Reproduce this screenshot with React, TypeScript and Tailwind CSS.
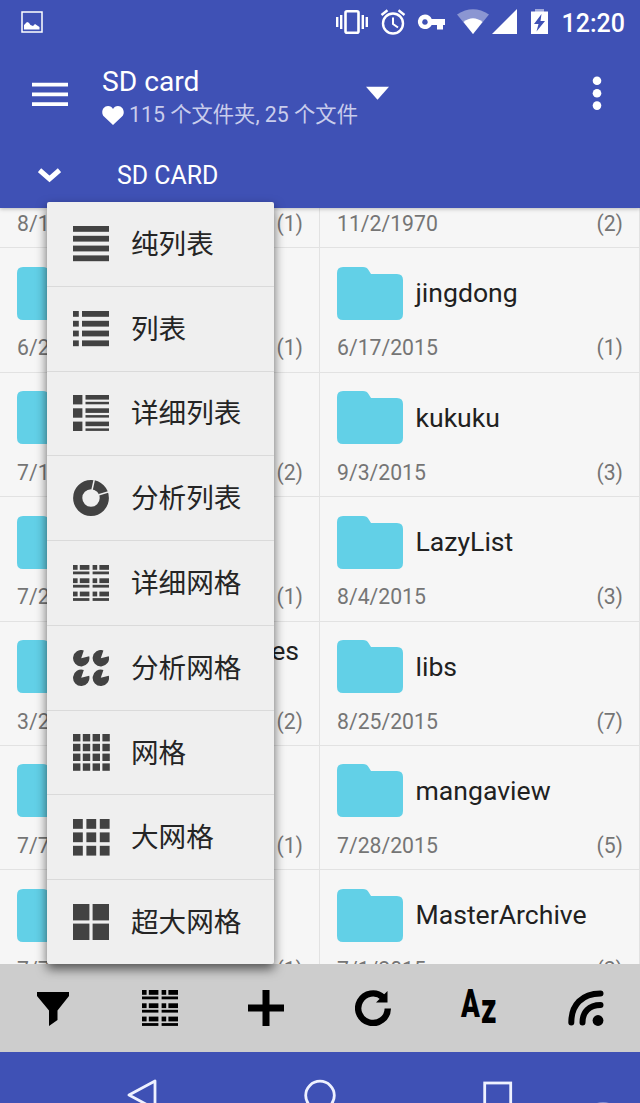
import type { ReactNode } from "react";

interface IconProps {
  w: number;
  h: number;
  className?: string;
  children: ReactNode;
}

const Icon = ({ w, h, className, children }: IconProps) => (
  <svg width={w} height={h} viewBox={`0 0 ${w} ${h}`} fill="currentColor" className={`shrink-0 ${className ?? ""}`}>
    {children}
  </svg>
);

const PlainListIcon = () => (
  <Icon w={36} h={36}>
    {[0, 9.8, 19.6, 29.4].map((y) => (
      <rect key={y} y={y} width="36" height="5.8" />
    ))}
  </Icon>
);

const ListIcon = () => (
  <Icon w={36} h={36}>
    {[0, 9.8, 19.6, 29.4].map((y) => (
      <g key={y}>
        <rect y={y} width="5.8" height="5.8" />
        <rect x="9" y={y} width="27" height="5.8" />
      </g>
    ))}
  </Icon>
);

const DetailListIcon = () => (
  <Icon w={36} h={36}>
    {[0, 13.3, 26.6].map((y) => (
      <g key={y}>
        <rect y={y} width="9.4" height="9.4" />
        <rect x="12.5" y={y} width="23.5" height="4.6" />
        <rect x="12.5" y={y + 6.8} width="23.5" height="2.5" />
      </g>
    ))}
  </Icon>
);

const DonutIcon = () => (
  <Icon w={36} h={36}>
    <circle cx="18" cy="18" r="13.3" fill="none" stroke="currentColor" strokeWidth="9.2" />
    <path d="M19 10 21.2 0M26 14.8 36 11.6" stroke="#efefef" strokeWidth="1.5" />
  </Icon>
);

const DetailGridIcon = () => (
  <Icon w={36} h={36}>
    {[0, 13.3, 26.6].map((y) =>
      [0, 19.6].map((x) => (
        <g key={`${x}-${y}`}>
          <rect x={x} y={y} width="4.6" height="4.8" />
          <rect x={x + 6.8} y={y} width="9.6" height="4.8" />
          <rect x={x} y={y + 6.5} width="16.4" height="2.8" />
        </g>
      ))
    )}
  </Icon>
);

const PieGridIcon = () => (
  <Icon w={36} h={36}>
    {[0, 19.6].map((y) =>
      [0, 19.6].map((x) => (
        <path
          key={`${x}-${y}`}
          transform={`translate(${x} ${y})`}
          d="M8.2 8.2 10.8.4A8.2 8.2 0 1 0 16.2 6.2Z"
        />
      ))
    )}
  </Icon>
);

const Squares = ({ steps, size }: { steps: number[]; size: number }) => (
  <Icon w={37} h={37}>
    {steps.map((y) => steps.map((x) => <rect key={`${x}-${y}`} x={x} y={y} width={size} height={size} />))}
  </Icon>
);

const menuItems = [
  { label: "纯列表", icon: <PlainListIcon /> },
  { label: "列表", icon: <ListIcon /> },
  { label: "详细列表", icon: <DetailListIcon /> },
  { label: "分析列表", icon: <DonutIcon /> },
  { label: "详细网格", icon: <DetailGridIcon /> },
  { label: "分析网格", icon: <PieGridIcon /> },
  { label: "网格", icon: <Squares steps={[0, 9.8, 19.6, 29.4]} size={7.4} /> },
  { label: "大网格", icon: <Squares steps={[0, 13.4, 26.8]} size={9.8} /> },
  { label: "超大网格", icon: <Squares steps={[0, 19.6]} size={16.4} /> },
];

interface Folder {
  name?: string;
  date: string;
  count: number;
  wrapped?: boolean;
}

const rows: [Folder, Folder][] = [
  [{ date: "8/1", count: 1 }, { date: "11/2/1970", count: 2 }],
  [{ date: "6/2", count: 1 }, { name: "jingdong", date: "6/17/2015", count: 1 }],
  [{ date: "7/1", count: 2 }, { name: "kukuku", date: "9/3/2015", count: 3 }],
  [{ date: "7/2", count: 1 }, { name: "LazyList", date: "8/4/2015", count: 3 }],
  [{ name: "es", date: "3/2", count: 2, wrapped: true }, { name: "libs", date: "8/25/2015", count: 7 }],
  [{ date: "7/7", count: 1 }, { name: "mangaview", date: "7/28/2015", count: 5 }],
  [{ date: "7/7", count: 1 }, { name: "MasterArchive", date: "7/1/2015", count: 2 }],
];

const FolderCell = ({ name, date, count, wrapped }: Folder) => (
  <div className="flex flex-col w-1/2 pl-[17px] pr-[16px] pt-[18px] border-r border-b border-[#e2e2e2]">
    <div className="flex items-center h-[54px]">
      <Icon w={66} h={53} className="text-[#62d0e7]">
        <path d="M6 0H26Q30 0 31.5 3L34 7H60Q66 7 66 13V47Q66 53 60 53H6Q0 53 0 47V6Q0 0 6 0Z" />
      </Icon>
      {name && (
        <span className={wrapped ? "ml-auto mr-[4px] mb-[31px] text-[26.6px] text-[#212121]" : "ml-[12.5px] text-[26.6px] text-[#212121]"}>
          {name}
        </span>
      )}
    </div>
    <div className="flex justify-between mt-[15px] text-[21.2px] leading-[26px] text-[#757575]">
      <span>{date}</span>
      <span>({count})</span>
    </div>
  </div>
);

const StatusBar = () => (
  <div className="flex items-center h-[44px] pl-[21px] pr-[15px]">
    <Icon w={22} h={22}>
      <rect x="1" y="1" width="20" height="20" fill="none" stroke="currentColor" strokeWidth="1.5" />
      <path d="M3 18.500V14L6 11Q8 11 9.500 14L12 15 14 13 18.500 16V18.500Z" />
    </Icon>
    <Icon w={32} h={26} className="ml-[293px]">
      <rect x="9.500" y="2.200" width="13" height="21.600" rx="1.500" fill="none" stroke="currentColor" strokeWidth="2.600" />
      <path d="M1.200 8V18M5.200 6V20M26.800 6V20M30.800 8V18" stroke="currentColor" strokeWidth="2.400" />
    </Icon>
    <Icon w={26} h={26} className="ml-[12px]">
      <g fill="none" stroke="currentColor" strokeWidth="2.400">
        <circle cx="13" cy="14.500" r="10" />
        <path d="M13 8.500V15L18 18.500" strokeWidth="2" />
        <path d="M1.500 6 7.500 1.200M24.500 6 18.500 1.200" />
      </g>
    </Icon>
    <Icon w={28} h={18} className="ml-[11px]">
      <path
        fillRule="evenodd"
        d="M8 1.500A7.300 7.300 0 1 0 14.700 12H20V16.500H26V12H28V6H14.700A7.300 7.300 0 0 0 8 1.500ZM8 6.200A2.800 2.800 0 1 1 7.900 6.200Z"
      />
    </Icon>
    <Icon w={32} h={26} className="ml-[12px]">
      <path d="M0 5.500Q16-5 32 5.500L16 25Z" opacity=".4" />
      <path d="M6.500 13Q16 5.500 25.500 13L16 25Z" />
    </Icon>
    <Icon w={25} h={26} className="ml-[3px]">
      <path d="M25 0V25H0Z" />
    </Icon>
    <Icon w={17} h={26} className="ml-[14px]">
      <path d="M4 0H13V3H4Z" opacity=".5" />
      <path fillRule="evenodd" d="M0 2.500H17V25H0ZM10.500 5 3 15H7.500L5.500 22.500 14 12H9.500Z" />
    </Icon>
    <span className="ml-auto mt-[2px] text-[25px] leading-none font-medium">12:20</span>
  </div>
);

const TitleBar = () => (
  <div className="flex h-[100px] pl-[32px] pr-[38px]">
    <Icon w={36} h={24} className="mt-[38px]">
      <path d="M0 .7H36V4.500H0ZM0 10.500H36V14.300H0ZM0 20.200H36V24H0Z" />
    </Icon>
    <div className="flex flex-col ml-[34px] pt-[20px] whitespace-nowrap">
      <h1 className="text-[28.200px] leading-[35px]">SD card</h1>
      <div className="flex items-center h-[32px] text-[21.300px] text-[#c9cdec]">
        <Icon w={22} h={19} className="text-white mr-[5px]">
          <path d="M11 19 2 10.500C-1.500 7 .5 0 6 0Q9.500 0 11 3 12.500 0 16 0C21.500 0 23.500 7 20 10.500Z" />
        </Icon>
        115 个文件夹, 25 个文件
      </div>
    </div>
    <Icon w={23} h={14} className="ml-[8px] mt-[42px]">
      <path d="M0 .8H23L11.500 13.800Z" />
    </Icon>
    <Icon w={10} h={36} className="ml-auto mt-[31px]">
      <circle cx="5" cy="5.800" r="4.300" />
      <circle cx="5" cy="18.200" r="4.300" />
      <circle cx="5" cy="30.600" r="4.300" />
    </Icon>
  </div>
);

const ViewMenu = () => (
  <div className="absolute left-[47px] top-[202px] w-[227px] h-[762px] flex flex-col rounded-[2px] bg-[#efefef] shadow-[0_5px_11px_rgba(0,0,0,0.6)]">
    {menuItems.map(({ label, icon }, i) => (
      <div
        key={label}
        className={`flex flex-1 items-center pl-[26px] text-[#424242] ${i < menuItems.length - 1 ? "border-b border-[#dadada]" : ""}`}
      >
        <span className="flex w-[58px]">{icon}</span>
        <span className="mt-[2px] text-[27.600px] leading-[36px] text-[#252525]">{label}</span>
      </div>
    ))}
  </div>
);

const Toolbar = () => (
  <div className="grid grid-cols-6 h-[88px] shrink-0 items-center justify-items-center pr-px bg-[#cdcdcd] text-black">
    <Icon w={34} h={36}>
      <path d="M1 2H33V6L21.500 20.500V30L13 36V20.500L1 6Z" />
    </Icon>
    <DetailGridIcon />
    <Icon w={36} h={36}>
      <path d="M14.500 0H21.500V14.500H36V21.500H21.500V36H14.500V21.500H0V14.500H14.500Z" />
    </Icon>
    <Icon w={36} h={36}>
      <path d="M28 7.300A14.800 14.800 0 1 0 32.800 18.500" fill="none" stroke="currentColor" strokeWidth="6.400" />
      <path d="M32.500 1V12.500H21Z" />
    </Icon>
    <div className="flex w-[36px] h-[36px] font-black leading-none">
      <span className="w-[20px] text-[39px] origin-top-left scale-x-[.71] -mt-[5px]">A</span>
      <span className="w-[16px] text-[43px] origin-top-left scale-x-[.7] -mt-[3px]">z</span>
    </div>
    <Icon w={36} h={36}>
      <g fill="none" stroke="currentColor" strokeWidth="6" strokeLinecap="round">
        <path d="M3.300 32.500C3.300 15 14 3.500 32.500 3.500" />
        <path d="M14.500 32.500C14.500 22 21 15 32.500 15" />
      </g>
      <circle cx="30" cy="30.500" r="5.400" />
    </Icon>
  </div>
);

const NavBar = () => (
  <div className="h-[51px] shrink-0 overflow-hidden bg-[#3f51b5] pt-[25px] text-[#eef1ff]">
    <div className="flex">
      <Icon w={32} h={34} className="ml-[126px]">
        <path d="M29 4V32L3 18Z" fill="none" stroke="currentColor" strokeWidth="2.800" strokeLinejoin="round" />
      </Icon>
      <Icon w={34} h={34} className="ml-[145px]">
        <circle cx="17" cy="18.500" r="14.300" fill="none" stroke="currentColor" strokeWidth="2.800" />
      </Icon>
      <Icon w={30} h={34} className="ml-[146px]">
        <rect x="1.700" y="6" width="26" height="26" fill="none" stroke="currentColor" strokeWidth="2.800" />
      </Icon>
      <Icon w={24} h={30} className="ml-[78px] text-[#8791d3]">
        <ellipse cx="12" cy="29" rx="9" ry="4" />
      </Icon>
    </div>
  </div>
);

const App = () => (
  <div className="relative flex flex-col w-[640px] h-[1103px] overflow-hidden font-['Roboto','Noto_Sans_CJK_SC',sans-serif]">
    <header className="relative h-[208px] shrink-0 bg-[#3f51b5] text-white shadow-[0_1px_4px_rgba(0,0,0,0.25)]">
      <StatusBar />
      <TitleBar />
      <div className="flex items-center h-[62px] pl-[38px]">
        <Icon w={23} h={16}>
          <path d="M1.500 3.200 11.500 12 21.500 3.200" fill="none" stroke="currentColor" strokeWidth="5" />
        </Icon>
        <span className="ml-[56px] mt-px text-[24.900px]">SD CARD</span>
      </div>
    </header>
    <main className="flex-1 min-h-0 overflow-hidden bg-[#f6f6f6]">
      <div className="-mt-[84px]">
        {rows.map(([left, right], i) => (
          <div key={i} className="flex h-[124.400px]">
            <FolderCell {...left} />
            <FolderCell {...right} />
          </div>
        ))}
      </div>
    </main>
    <Toolbar />
    <NavBar />
    <ViewMenu />
  </div>
);

export default App;
